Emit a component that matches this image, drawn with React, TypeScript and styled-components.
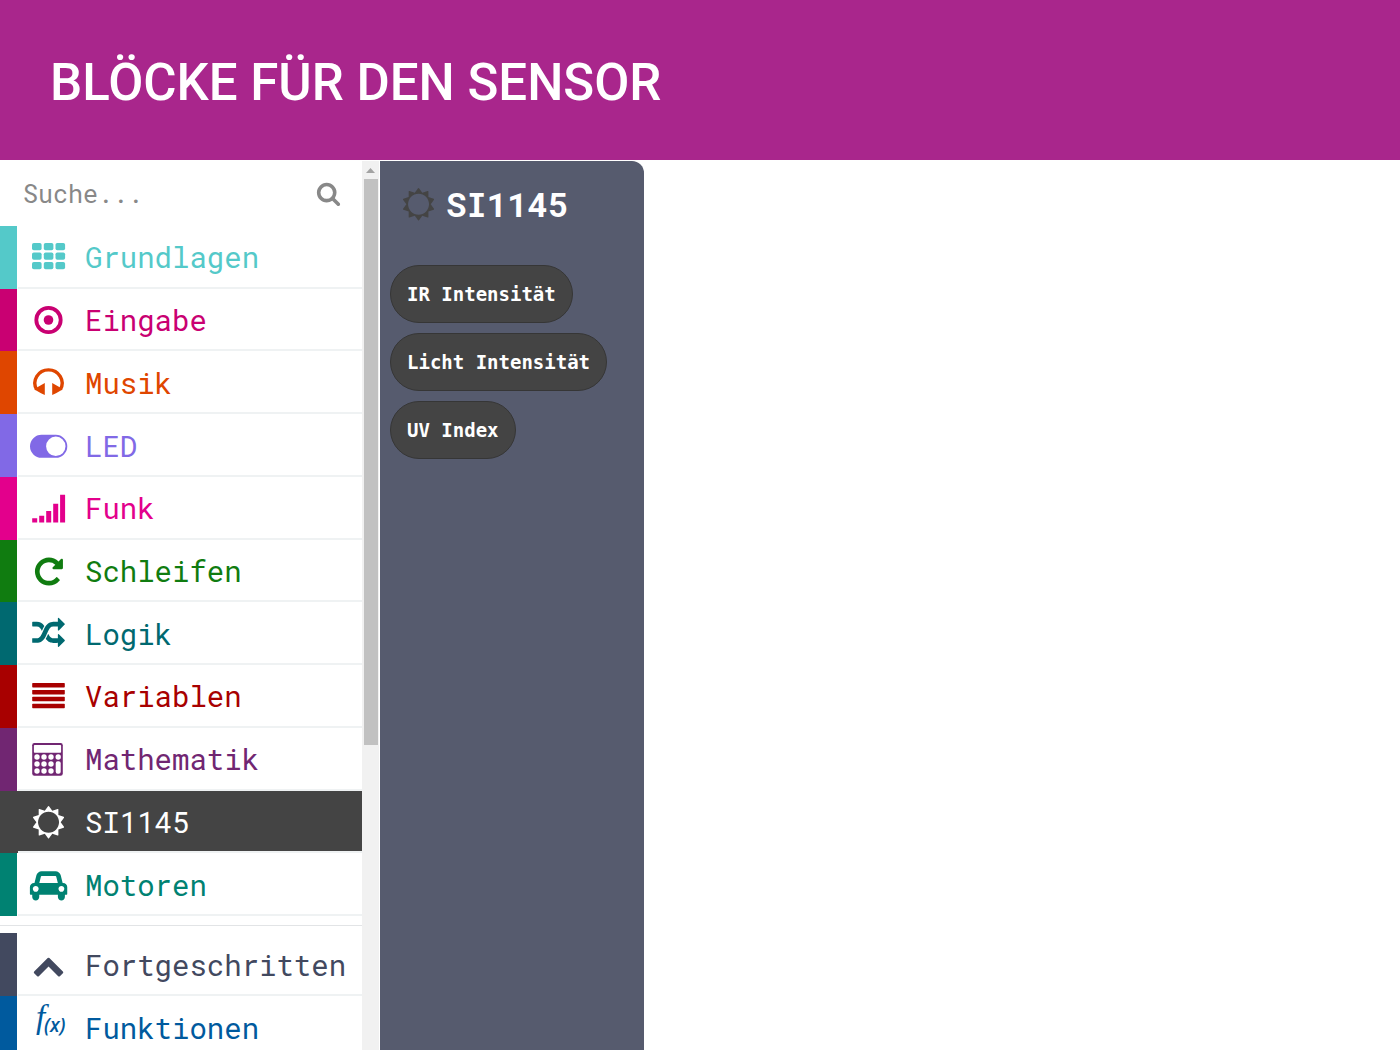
import React from "react";
import styled, { createGlobalStyle } from "styled-components";

const mono = `"Roboto Mono", "DejaVu Sans Mono", "Liberation Mono", monospace`;
const blockMono = `"DejaVu Sans Mono", "Liberation Mono", monospace`;

const GlobalStyle = createGlobalStyle`
  *, *::before, *::after { box-sizing: border-box; }
  body { margin: 0; background: #fff; }
  button, input { font: inherit; }
`;

const Page = styled.div`
  display: flex;
  flex-direction: column;
  height: 100vh;
  overflow: hidden;
  font-family: ${mono};
`;

const Header = styled.header`
  flex: none;
  display: flex;
  align-items: center;
  padding: 53px 50px 47px;
  background: #a9268c;
`;

const Title = styled.h1`
  margin: 0;
  color: #fff;
  font-family: Roboto, sans-serif;
  font-size: 51px;
  font-weight: 500;
  line-height: 60px;
`;

const Editor = styled.main`
  flex: 1;
  display: flex;
  min-height: 0;
  padding-top: 1px;
`;

const Toolbox = styled.nav`
  flex: none;
  width: 362px;
  overflow: hidden;
`;

const SearchBar = styled.label`
  display: flex;
  align-items: center;
  height: 65px;
  padding: 0 21px 0 23px;
  color: #888;
`;

const SearchInput = styled.input`
  flex: 1;
  min-width: 0;
  padding: 0;
  border: 0;
  outline: 0;
  background: none;
  color: #444;
  font-size: 25px;
  line-height: 32px;

  &::placeholder {
    color: #888;
    opacity: 1;
  }
`;

const SearchIcon = styled.svg`
  flex: none;
  width: 25px;
  height: 25px;
  fill: currentColor;
`;

const CategoryGroup = styled.div<{ $height?: string }>`
  display: grid;
  grid-auto-rows: ${(p) => (p.$height ? "1fr" : "63px")};
  min-height: ${(p) => p.$height ?? "0"};
`;

const Category = styled.button<{ $color: string; $selected?: boolean }>`
  display: flex;
  width: 100%;
  padding: 0;
  border: 0;
  background: ${(p) => (p.$selected ? p.$color : "#fff")};
  color: ${(p) => (p.$selected ? "#fff" : p.$color)};
  text-align: left;
  cursor: pointer;

  &::before {
    content: "";
    flex: none;
    align-self: stretch;
    width: 17px;
    margin-right: 1px;
    background: ${(p) => p.$color};
  }
`;

const CategoryBody = styled.span`
  flex: 1;
  align-self: stretch;
  display: flex;
  align-items: center;
  gap: 17px;
  padding: 2px 0 0 10px;
  border-bottom: 2px solid #eff2f3;
`;

const CategoryIcon = styled.svg`
  flex: none;
  width: 40px;
  height: 40px;
  overflow: visible;
  fill: currentColor;
`;

const CategoryName = styled.span`
  font-size: 29px;
  line-height: 40px;
`;

const Divider = styled.hr`
  height: 1px;
  margin: 9px 0 7px;
  border: 0;
  background: #e2e4e6;
`;

const ScrollTrack = styled.div`
  flex: none;
  display: flex;
  flex-direction: column;
  align-items: center;
  width: 17px;
  margin-right: 1px;
  background: #f1f1f1;
`;

const ScrollArrow = styled.svg`
  flex: none;
  width: 17px;
  height: 18px;
  fill: #a3a3a3;
`;

const ScrollThumb = styled.div`
  flex: none;
  width: 14px;
  height: 566px;
  background: #c1c1c1;
`;

const Flyout = styled.section`
  flex: none;
  width: 264px;
  padding: 23px 10px;
  border-top-right-radius: 12px;
  background: #565b6e;
`;

const FlyoutHeading = styled.h2`
  display: flex;
  align-items: center;
  gap: 8px;
  margin: 0 0 41px 8px;
  color: #fff;
  font-size: 34px;
  font-weight: 700;
  line-height: 40px;

  svg {
    color: #444;
  }
`;

const BlockList = styled.div`
  display: flex;
  flex-direction: column;
  align-items: flex-start;
  gap: 10px;
`;

const Block = styled.button`
  height: 58px;
  padding: 0 16px;
  border: 1px solid #363636;
  border-radius: 29px;
  background: #444;
  color: #fff;
  font-family: ${blockMono};
  font-size: 19px;
  font-weight: 700;
  line-height: 24px;
  white-space: nowrap;
  cursor: grab;
`;

const icons = {
  grid: [6, 15.5, 25].map((y) =>
    [4, 15.8, 27.5].map((x) => (
      <rect key={`${x}-${y}`} x={x} y={y} width="9.6" height="7.2" rx="1.8" />
    ))
  ),
  target: (
    <>
      <circle cx="20.5" cy="20" r="12.2" fill="none" stroke="currentColor" strokeWidth="3.8" />
      <circle cx="20.5" cy="20" r="4.8" />
    </>
  ),
  headphones: (
    <>
      <path
        d="M8.6 26.5A13.6 13.2 0 1 1 32.4 26.5"
        fill="none"
        stroke="currentColor"
        strokeWidth="3.4"
      />
      <path d="M16.8 20v12L13 30.300 6.500 26.500l1.500-1.500zM24.200 20v12l3.800-1.700 6.500-3.800-1.500-1.500z" />
    </>
  ),
  toggle: (
    <path
      fillRule="evenodd"
      d="M13.500 8.800h14.300a11.500 11.500 0 0 1 0 23H13.500a11.500 11.500 0 0 1 0-23zM27.800 10.600a9.700 9.700 0 1 0 0 19.400 9.700 9.700 0 0 0 0-19.400z"
    />
  ),
  signal: (
    <path d="M4.200 30.200h5v4.200h-5zM11.200 27.800h5v6.600h-5zM18.200 23h5v11.400h-5zM25.200 15.800h5v18.600h-5zM32.100 6.800h5v27.600h-5z" />
  ),
  repeat: (
    <path
      transform="translate(4.600 4.200) scale(0.01823)"
      d="M1664 256v448q0 26-19 45t-45 19h-448q-42 0-59-40-17-39 14-69l138-138q-148-137-349-137-104 0-198.500 40.500t-163.500 109.500-109.500 163.500-40.500 198.500 40.500 198.500 109.500 163.500 163.500 109.500 198.500 40.500q119 0 225-52t179-147q7-10 23-12 15 0 25 9l137 138q9 8 9.500 20.500t-7.500 22.500q-109 132-264 204.500t-327 72.500q-156 0-298-61t-245-164-164-245-61-298 61-298 164-245 245-164 298-61q147 0 284.500 55.500t244.500 156.500l130-129q29-31 70-14 39 17 39 59z"
    />
  ),
  shuffle: (
    <path
      transform="translate(4.200 3.200) scale(0.01823)"
      d="M666 481q-60 92-137 273-22-45-37-72.500t-40.500-63.500-51-56.500-63-35-81.500-14.500h-224q-14 0-23-9t-9-23v-192q0-14 9-23t23-9h224q250 0 410 225zm1126 799q0 14-9 23l-320 320q-9 9-23 9-13 0-22.500-9.500t-9.500-22.500v-192q-32 0-85 .5t-81 1-73-1-71-5-64-10.500-63-18.500-58-28.500-59-40-55-53.500-56-69.500q59-93 136-273 22 45 37 72.500t40.500 63.500 51 56.500 63 35 81.500 14.500h256v-192q0-14 9-23t23-9q12 0 24 10l319 319q9 9 9 23zm0-896q0 14-9 23l-320 320q-9 9-23 9-13 0-22.500-9.500t-9.500-22.500v-192h-256q-48 0-87 15t-69 45-51 61.500-45 77.500q-32 62-78 171-29 66-49.500 111t-54 105-64 100-74 83-90 68.500-106.500 42-128 16.500h-224q-14 0-23-9t-9-23v-192q0-14 9-23t23-9h224q48 0 87-15t69-45 51-61.500 45-77.500q32-62 78-171 29-66 49.500-111t54-105 64-100 74-83 90-68.500 106.500-42 128-16.500h256v-192q0-14 9-23t23-9q12 0 24 10l319 319q9 9 9 23z"
    />
  ),
  lines: [7, 13.9, 20.8, 27.700].map((y) => (
    <rect key={y} x="4.200" y={y} width="32.600" height="4.500" rx="0.700" />
  )),
  calculator: (
    <>
      <rect x="4.200" y="4" width="30.600" height="32.700" rx="2.200" />
      <rect x="5.900" y="6" width="27.200" height="7.800" rx="0.800" fill="#fff" />
      {[18, 25, 32].map((y) =>
        [9, 16, 23, 30.200].map((x) =>
          x > 30 && y > 18 ? null : (
            <circle key={`${x}-${y}`} cx={x} cy={y} r="2.700" fill="#fff" />
          )
        )
      )}
      <rect x="27.700" y="22.300" width="5" height="12.400" rx="2" fill="#fff" />
    </>
  ),
  sun: (
    <path
      transform="translate(4.200 3.900) scale(0.01823)"
      d="M1472 896q0-117-45.500-223.500t-123-184-184-123-223.500-45.500-223.500 45.500-184 123-123 184-45.500 223.500 45.500 223.500 123 184 184 123 223.500 45.500 223.500-45.500 184-123 123-184 45.500-223.500zm276 277q-4 15-20 20l-292 96v306q0 16-13 26-15 10-29 4l-292-94-180 248q-10 13-26 13t-26-13l-180-248-292 94q-14 6-29-4-13-10-13-26v-306l-292-96q-16-5-20-20-5-17 4-29l180-248-180-248q-9-13-4-29 4-15 20-20l292-96v-306q0-16 13-26 15-10 29-4l292 94 180-248q9-12 26-12t26 12l180 248 292-94q14-6 29 4 13 10 13 26v306l292 96q16 5 20 20 5 16-4 29l-180 248 180 248q9 12 4 29z"
    />
  ),
  car: (
    <path
      transform="translate(1.900 4) scale(0.01823)"
      d="M480 1088q0-66-47-113t-113-47-113 47-47 113 47 113 113 47 113-47 47-113zm36-320h1016l-89-357q-2-8-14-17.500t-21-9.500h-768q-9 0-21 9.500t-14 17.500zm1372 320q0-66-47-113t-113-47-113 47-47 113 47 113 113 47 113-47 47-113zm160-96v384q0 14-9 23t-23 9h-96v128q0 80-56 136t-136 56-136-56-56-136v-128h-1024v128q0 80-56 136t-136 56-136-56-56-136v-128h-96q-14 0-23-9t-9-23v-384q0-93 65.500-158.500t158.500-65.500h28l105-419q23-94 104-157.500t179-63.500h768q98 0 179 63.500t104 157.500l105 419h28q93 0 158.500 65.500t65.500 158.500z"
    />
  ),
  chevron: (
    <path
      transform="translate(4.200 4) scale(0.01823)"
      d="M1683 1331l-166 165q-19 19-45 19t-45-19l-531-531-531 531q-19 19-45 19t-45-19l-166-165q-19-19-19-45.500t19-45.500l742-741q19-19 45-19t45 19l742 741q19 19 19 45.500t-19 45.500z"
    />
  ),
  fx: (
    <>
      <text x="8" y="20" fontFamily="Liberation Serif, serif" fontStyle="italic" fontSize="33">
        f
      </text>
      <text
        x="16"
        y="24"
        fontFamily="Open Sans, sans-serif"
        fontStyle="italic"
        fontSize="19"
        fontWeight="600"
      >
        (x)
      </text>
    </>
  ),
};

type IconName = keyof typeof icons;

function Icon({ name }: { name: IconName }) {
  return (
    <CategoryIcon viewBox="0 0 40 40" aria-hidden="true">
      {icons[name]}
    </CategoryIcon>
  );
}

interface Entry {
  name: string;
  color: string;
  icon: IconName;
  selected?: boolean;
}

const basic: Entry[] = [
  { name: "Grundlagen", color: "#54c9c9", icon: "grid" },
  { name: "Eingabe", color: "#c90072", icon: "target" },
  { name: "Musik", color: "#df4600", icon: "headphones" },
  { name: "LED", color: "#8169e6", icon: "toggle" },
  { name: "Funk", color: "#e3008c", icon: "signal" },
  { name: "Schleifen", color: "#107c10", icon: "repeat" },
  { name: "Logik", color: "#006970", icon: "shuffle" },
  { name: "Variablen", color: "#a80000", icon: "lines" },
  { name: "Mathematik", color: "#712672", icon: "calculator" },
  { name: "SI1145", color: "#444444", icon: "sun", selected: true },
  { name: "Motoren", color: "#008272", icon: "car" },
];

const advanced: Entry[] = [
  { name: "Fortgeschritten", color: "#42495f", icon: "chevron" },
  { name: "Funktionen", color: "#005a9e", icon: "fx" },
];

const blocks = ["IR Intensität", "Licht Intensität", "UV Index"];

function Categories({ entries, height }: { entries: Entry[]; height?: string }) {
  return (
    <CategoryGroup $height={height}>
      {entries.map((e) => (
        <Category key={e.name} type="button" $color={e.color} $selected={e.selected}>
          <CategoryBody>
            <Icon name={e.icon} />
            <CategoryName>{e.name}</CategoryName>
          </CategoryBody>
        </Category>
      ))}
    </CategoryGroup>
  );
}

export default function App() {
  return (
    <Page>
      <GlobalStyle />
      <Header>
        <Title>BLÖCKE FÜR DEN SENSOR</Title>
      </Header>
      <Editor>
        <Toolbox>
          <SearchBar>
            <SearchInput type="text" placeholder="Suche..." aria-label="Suche" />
            <SearchIcon viewBox="0 0 1792 1792" aria-hidden="true">
              <path d="M1216 832q0-185-131.500-316.500t-316.500-131.500-316.500 131.500-131.500 316.500 131.500 316.500 316.500 131.500 316.500-131.500 131.500-316.500zm512 832q0 52-38 90t-90 38q-54 0-90-38l-343-342q-179 124-399 124-143 0-273.500-55.500t-225-150-150-225-55.500-273.500 55.500-273.500 150-225 225-150 273.500-55.500 273.500 55.500 225 150 150 225 55.500 273.500q0 220-124 399l343 343q37 37 37 90z" />
            </SearchIcon>
          </SearchBar>
          <Categories entries={basic} height="690px" />
          <Divider />
          <Categories entries={advanced} />
        </Toolbox>
        <ScrollTrack aria-hidden="true">
          <ScrollArrow viewBox="0 0 17 18">
            <path d="M4 12l4.500-5 4.500 5z" />
          </ScrollArrow>
          <ScrollThumb />
        </ScrollTrack>
        <Flyout>
          <FlyoutHeading>
            <Icon name="sun" />
            SI1145
          </FlyoutHeading>
          <BlockList>
            {blocks.map((b) => (
              <Block key={b} type="button">
                {b}
              </Block>
            ))}
          </BlockList>
        </Flyout>
      </Editor>
    </Page>
  );
}
